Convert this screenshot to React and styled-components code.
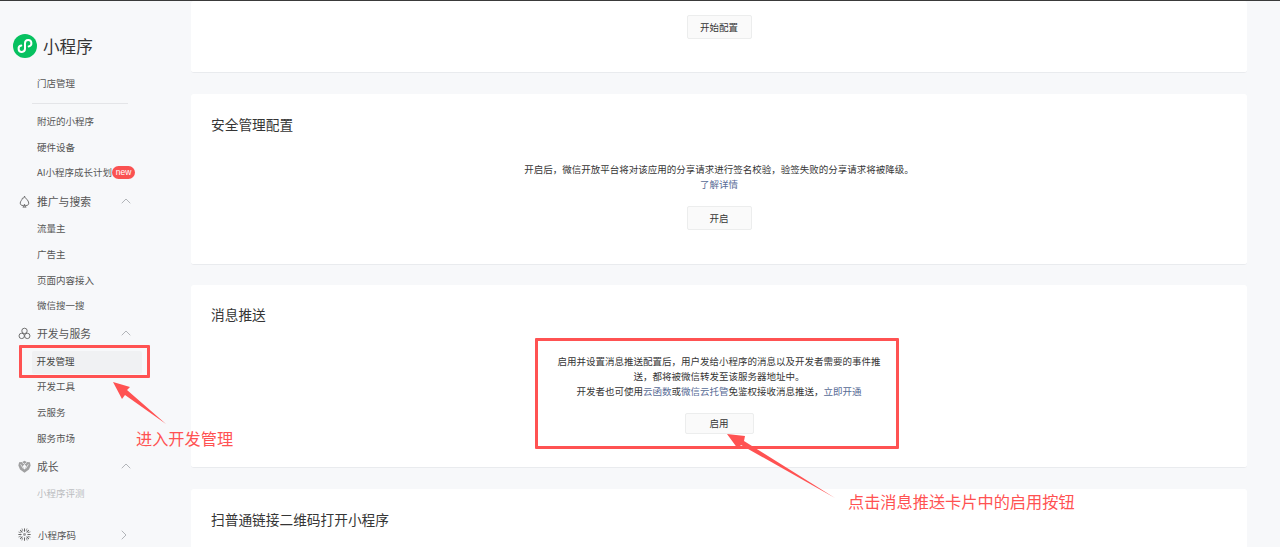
import React from "react";
import styled, { createGlobalStyle } from "styled-components";
import { ChevronUp, ChevronRight } from "lucide-react";

const RED = "#ff5252";

const GlobalStyle = createGlobalStyle`
  html, body {
    margin: 0;
    padding: 0;
    background: #f7f8fa;
    overflow: hidden;
  }

  body {
    font-family: "Noto Sans CJK SC", "Noto Sans", sans-serif;
  }
`;

const Page = styled.div`
  position: relative;
  width: 1280px;
  height: 547px;
  overflow: hidden;
  border-top: 1px solid #3a3a3a;
  box-sizing: border-box;
  display: flex;
`;

const Sidebar = styled.aside`
  width: 191px;
  flex-shrink: 0;
  padding-top: 33px;
`;

const Brand = styled.div`
  display: flex;
  align-items: center;
  gap: 6px;
  height: 24px;
  padding-left: 13px;
  margin-bottom: 13px;
  font-size: 16.6px;
  color: #353535;
`;

const NavItem = styled.div`
  height: 25.6px;
  line-height: 25.6px;
  padding-left: 37px;
  font-size: 9.5px;
  color: ${(p) => (p.$muted ? "#bbbdc0" : "#555")};
  white-space: nowrap;
  display: flex;
  align-items: center;
`;

const ActiveItem = styled.div`
  margin: 3px 0 0 32px;
  width: 110px;
  height: 23px;
  padding: 0 0 3px 4.5px;
  box-sizing: border-box;
  display: flex;
  align-items: center;
  background: #f0f1f3;
  border-radius: 2px;
  font-size: 9.5px;
  color: #444;
`;

const Divider = styled.div`
  width: 96px;
  height: 1px;
  margin: 6px 0 5.4px 32px;
  background: #e4e5e8;
`;

const NewBadge = styled.span`
  display: inline-flex;
  align-items: center;
  justify-content: center;
  width: 23px;
  height: 13px;
  border-radius: 7px;
  background: #fa5151;
  color: #fff;
  font-size: 8.5px;
  font-family: "Liberation Sans", sans-serif;
`;

const Heading = styled.div`
  display: flex;
  align-items: center;
  height: 30px;
  margin-top: ${(p) => p.$top || 0}px;
  padding-left: 18px;
  font-size: ${(p) => p.$size || 10.8}px;
  color: #555;

  svg.mark {
    width: 13px;
    height: 13px;
    flex-shrink: 0;
    margin-right: ${(p) => p.$markGap || 6}px;
    color: #666;
  }

  svg.chev {
    margin-left: auto;
    margin-right: ${(p) => p.$chevRight || 57}px;
    color: #a0a3a8;
  }
`;

const Main = styled.main`
  width: 1056px;
  display: flex;
  flex-direction: column;
  gap: 20.5px;
`;

const Card = styled.section`
  flex-shrink: 0;
  height: ${(p) => p.$height}px;
  padding: ${(p) => p.$pad ?? 21}px 20px 0;
  box-sizing: border-box;
  background: #fff;
  border-radius: 3px;
  border-bottom: 1px solid #e9ebee;
`;

const CardTitle = styled.h2`
  margin: 0;
  height: 18px;
  line-height: 18px;
  font-size: 13.7px;
  font-weight: 400;
  color: #353535;
`;

const Notice = styled.div`
  width: ${(p) => p.$width || 400}px;
  margin: ${(p) => p.$top || 29}px auto 0;
  text-align: center;
  font-size: 9.5px;
  line-height: 15.3px;
  color: #353535;
`;

const Link = styled.a`
  color: #576b95;
  text-decoration: none;
`;

const Action = styled.div`
  display: flex;
  justify-content: center;
  margin-top: ${(p) => p.$top ?? 13}px;
`;

const Button = styled.button`
  width: ${(p) => p.$width || 65}px;
  height: ${(p) => p.$height || 24}px;
  padding: 0;
  background: #fafafa;
  border: 1px solid #eceded;
  border-radius: 2px;
  font-family: inherit;
  font-size: 9.5px;
  color: #353535;
`;

const RedBox = styled.div`
  position: absolute;
  left: ${(p) => p.$left}px;
  top: ${(p) => p.$top}px;
  width: ${(p) => p.$width}px;
  height: ${(p) => p.$height}px;
  box-sizing: border-box;
  border: 3px solid ${RED};
  border-radius: 1px;
`;

const Note = styled.div`
  position: absolute;
  left: ${(p) => p.$left}px;
  top: ${(p) => p.$top}px;
  font-size: 16.2px;
  line-height: 22px;
  color: ${RED};
  white-space: nowrap;
`;

const ArrowLayer = styled.svg`
  position: absolute;
  left: 0;
  top: -1px;
  width: 1280px;
  height: 547px;
  pointer-events: none;
`;

const LogoIcon = () => (
  <svg width="24" height="24" viewBox="0 0 24 24">
    <circle cx="12" cy="12" r="12" fill="#07c160" />
    <path
      d="M8.3 11.6A3.2 3.2 0 1 0 12 14.8V9.2a3.2 3.2 0 1 1 3.7 3.2"
      fill="none"
      stroke="#fff"
      strokeWidth="2"
      strokeLinecap="round"
    />
  </svg>
);

const SpadeIcon = () => (
  <svg className="mark" viewBox="0 0 14 14" fill="none" stroke="currentColor" strokeWidth="1">
    <path d="M7 1.2C7.2 3.4 11.6 5.4 11.6 8.8a2.6 2.6 0 0 1-4.6 1.6A2.6 2.6 0 0 1 2.4 8.8C2.4 6.6 4.4 5.6 4.8 3.4 5.8 4 6.6 3 7 1.2Z" />
    <path d="M7 10.4c0 1.2-.6 2-1.8 2.6h3.6C7.6 12.4 7 11.6 7 10.4Z" />
  </svg>
);

const CloverIcon = () => (
  <svg className="mark" viewBox="0 0 14 14" fill="none" stroke="currentColor" strokeWidth="1">
    <circle cx="7" cy="4.2" r="2.9" />
    <circle cx="4" cy="9.6" r="2.9" />
    <circle cx="10" cy="9.6" r="2.9" />
  </svg>
);

const LeafIcon = () => (
  <svg className="mark" viewBox="0 0 14 14" fill="currentColor">
    <path d="M7 .8 9.4 2.2 12.8 2.4 13.6 6 11.8 10.2 7 13.6 2.2 10.2.4 6 1.2 2.4 4.6 2.2Z" opacity=".6" />
    <path d="M7 4.6 9 6.8 7 10.4 5 6.8Z" fill="#f7f8fa" />
    <path d="M2.8 4.6 5.8 9.4M11.2 4.6 8.2 9.4M4.4 2.6 7 4.6 9.6 2.6" stroke="#f7f8fa" strokeWidth=".8" fill="none" />
  </svg>
);

const BurstIcon = () => (
  <svg className="mark" viewBox="0 0 14 14" fill="none" stroke="currentColor" strokeWidth="1.1" strokeLinecap="round">
    <path d="M7 .8v2.6M7 10.6v2.6M.8 7h2.6M10.6 7h2.6M2.6 2.6l1.8 1.8M9.6 9.6l1.8 1.8M11.4 2.6 9.6 4.4M4.4 9.6l-1.8 1.8" />
    <path d="M4.4.9l.8 2M9 11l.8 2M.9 9.6l2-.8M11 5l2-.8M9.6.9l-.8 2M5 11l-.8 2M.9 4.4l2 .8M11 9l2 .8" strokeWidth=".7" />
    <circle cx="7" cy="7" r="1.6" fill="currentColor" stroke="none" opacity=".6" />
  </svg>
);

const App = () => {
  return (
    <Page>
      <GlobalStyle />
      <Sidebar>
        <Brand>
          <LogoIcon />
          小程序
        </Brand>
        <NavItem>门店管理</NavItem>
        <Divider />
        <NavItem>附近的小程序</NavItem>
        <NavItem>硬件设备</NavItem>
        <NavItem>
          AI小程序成长计划
          <NewBadge>new</NewBadge>
        </NavItem>

        <Heading $top={0.7}>
          <SpadeIcon />
          推广与搜索
          <ChevronUp className="chev" size={16} strokeWidth={1.2} />
        </Heading>
        <NavItem>流量主</NavItem>
        <NavItem>广告主</NavItem>
        <NavItem>页面内容接入</NavItem>
        <NavItem>微信搜一搜</NavItem>

        <Heading $top={-0.5}>
          <CloverIcon />
          开发与服务
          <ChevronUp className="chev" size={16} strokeWidth={1.2} />
        </Heading>
        <ActiveItem>开发管理</ActiveItem>
        <NavItem>开发工具</NavItem>
        <NavItem>云服务</NavItem>
        <NavItem>服务市场</NavItem>

        <Heading>
          <LeafIcon />
          成长
          <ChevronUp className="chev" size={16} strokeWidth={1.2} />
        </Heading>
        <NavItem $muted>小程序评测</NavItem>

        <Heading $top={13} $size={9.5} $markGap={7} $chevRight={59}>
          <BurstIcon />
          小程序码
          <ChevronRight className="chev" size={16} strokeWidth={1.2} />
        </Heading>
      </Sidebar>

      <Main>
        <Card $height={72} $pad={14}>
          <Action $top={0}>
            <Button>开始配置</Button>
          </Action>
        </Card>

        <Card $height={171}>
          <CardTitle>安全管理配置</CardTitle>
          <Notice $top={29.5}>
            开启后，微信开放平台将对该应用的分享请求进行签名校验，验签失败的分享请求将被降级。
            <br />
            <Link>了解详情</Link>
          </Notice>
          <Action>
            <Button>开启</Button>
          </Action>
        </Card>

        <Card $height={183} $pad={20}>
          <CardTitle>消息推送</CardTitle>
          <Notice $width={330} $top={30.7}>
            启用并设置消息推送配置后，用户发给小程序的消息以及开发者需要的事件推送，都将被微信转发至该服务器地址中。
            <br />
            开发者也可使用<Link>云函数</Link>或<Link>微信云托管</Link>免鉴权接收消息推送，<Link>立即开通</Link>
          </Notice>
          <Action>
            <Button $width={69} $height={21}>启用</Button>
          </Action>
        </Card>

        <Card $height={120}>
          <CardTitle>扫普通链接二维码打开小程序</CardTitle>
        </Card>
      </Main>

      <RedBox $left={19} $top={344} $width={131} $height={33} />
      <RedBox $left={535} $top={337} $width={364} $height={111} />
      <ArrowLayer viewBox="0 0 1280 547">
        <polygon points="113,382 130,387 127,390 166,424 125,395 122,399" fill={RED} />
        <polygon points="727,434 745,436 744,441 835,498 741,445 738,449" fill={RED} />
      </ArrowLayer>
      <Note $left={136} $top={426}>进入开发管理</Note>
      <Note $left={848} $top={489}>点击消息推送卡片中的启用按钮</Note>
    </Page>
  );
};

export default App;
